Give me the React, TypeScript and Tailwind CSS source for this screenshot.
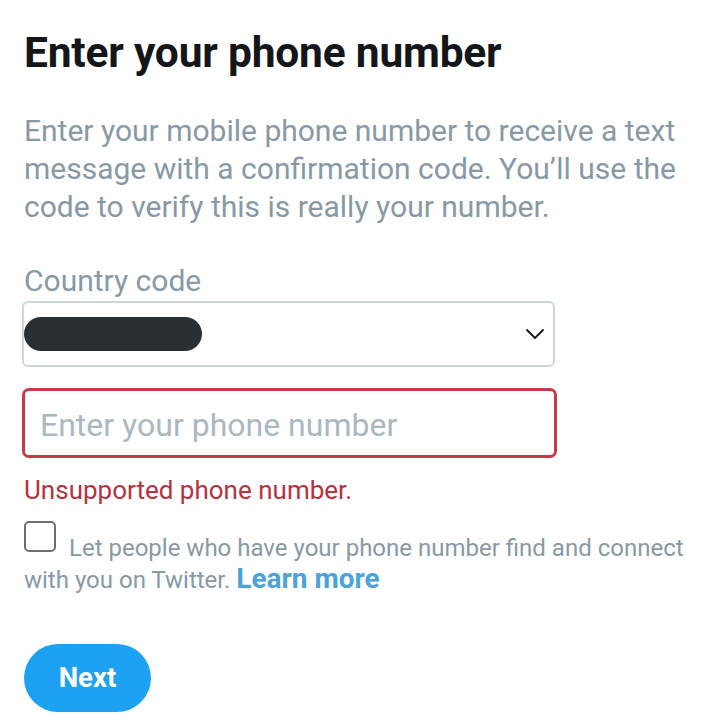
export default function App() {
  return (
    <div className="min-h-[721px] bg-white px-6 pt-[28px] font-['Roboto',sans-serif]">
      <h1 className="text-[42.5px] font-bold leading-[50px] tracking-[-0.2px] text-[#14171a]">
        Enter your phone number
      </h1>

      <p className="mt-[34px] w-[670px] text-[30px] leading-[38px] text-[#8899a6]">
        Enter your mobile phone number to receive a text message with a confirmation code. You’ll use the code
        to verify this is really your number.
      </p>

      <label className="mt-[36px] block text-[30px] leading-[38px] text-[#8899a6]">Country code</label>

      <div className="-ml-[2px] mt-[1px] flex h-[66px] w-[533px] items-center justify-between rounded-[6px] border-2 border-[#ccd6dd] pr-[8px]">
        <span className="h-[34px] w-[178px] rounded-full bg-[#292f33]" />
        <svg width="18" height="10" viewBox="0 0 18 10" fill="none" className="mr-[1px]">
          <path d="M1 1l8 8 8-8" stroke="#14171a" strokeWidth="1.8" strokeLinecap="round" strokeLinejoin="round" />
        </svg>
      </div>

      <div className="-ml-[2px] mt-[21px] flex h-[70px] w-[535px] items-center rounded-[7px] border-[3px] border-[#c9394b] px-[15px] pt-[4px]">
        <input
          placeholder="Enter your phone number"
          className="w-full bg-transparent text-[32px] text-[#14171a] outline-none placeholder:text-[#aab8c2]"
        />
      </div>

      <p className="mt-[17px] text-[26px] leading-[30px] text-[#b8313f]">Unsupported phone number.</p>

      <div className="mt-[16px] w-[670px] text-[24px] leading-[32px] text-[#8899a6]">
        <span className="mr-[13px] inline-block h-[31px] w-[32px] rounded-[5px] border-2 border-[#6e6e6e] align-[4px]" />
        Let people who have your phone number find and connect with you on Twitter.{' '}
        <a href="#" className="text-[28px] font-bold leading-[28px] text-[#4ba2dc]">
          Learn more
        </a>
      </div>

      <button className="mt-[48px] flex h-[68px] w-[127px] items-center justify-center rounded-full bg-[#1da1f2] text-[27.5px] font-bold text-white">
        Next
      </button>
    </div>
  );
}
